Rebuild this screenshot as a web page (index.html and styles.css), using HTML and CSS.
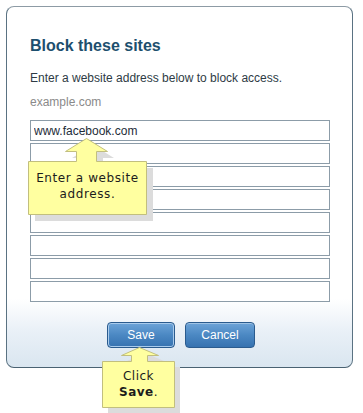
FILE: index.html
```html
<!DOCTYPE html>
<html>
<head>
<meta charset="utf-8">
<link rel="stylesheet" href="styles.css">
</head>
<body>
<div class="panel">
  <h1 class="title">Block these sites</h1>
  <p class="desc">Enter a website address below to block access.</p>
  <p class="hint">example.com</p>
  <div class="list">
    <input class="field" type="text" value="www.facebook.com">
    <input class="field" type="text">
    <input class="field" type="text">
    <input class="field" type="text">
    <input class="field" type="text">
    <input class="field" type="text">
    <input class="field" type="text">
    <input class="field" type="text">
  </div>
  <div class="actions">
    <button class="btn btn-focus">Save</button>
    <button class="btn">Cancel</button>
  </div>
</div>

<div class="callout callout-site">
  <svg class="callout-shape" width="128" height="84" viewBox="0 0 128 84">
    <polygon class="shadow" points="65,7 86,20 75,20 75,30 125,30 125,83 7,83 7,30 55,30 55,20 44,20"/>
    <polygon class="bubble" points="58.5,0.5 79.5,13.5 68.5,13.5 68.5,23.5 118.5,23.5 118.5,76.5 0.5,76.5 0.5,23.5 48.5,23.5 48.5,13.5 37.5,13.5"/>
  </svg>
  <div class="callout-text callout-text-site">Enter a website<br>address.</div>
</div>

<div class="callout callout-save">
  <svg class="callout-shape" width="80" height="67" viewBox="0 0 80 67">
    <polygon class="shadow" points="43,6 62,14 51,14 51,20 78,20 78,66 6,66 6,20 35,20 35,14 25,14"/>
    <polygon class="bubble" points="37.5,0.5 56.5,8.5 45.5,8.5 45.5,14.5 72.5,14.5 72.5,60.5 0.5,60.5 0.5,14.5 29.5,14.5 29.5,8.5 19.5,8.5"/>
  </svg>
  <div class="callout-text callout-text-save">Click<br><b>Save</b>.</div>
</div>
</body>
</html>
```

FILE: styles.css
```css
html, body {
  margin: 0;
  padding: 0;
  background: #ffffff;
}

body {
  padding: 6px;
  width: 363px;
  height: 413px;
  box-sizing: border-box;
  font-family: "Liberation Sans", Arial, sans-serif;
  position: relative;
  overflow: hidden;
}

.panel {
  width: 347px;
  height: 362px;
  box-sizing: border-box;
  border: 1px solid #5a7282;
  border-top-color: #8d9ba5;
  border-bottom-color: #4a6272;
  border-radius: 8px;
  background: linear-gradient(to bottom, #ffffff 0%, #ffffff 81%, #e9f0f7 90%, #dae6f0 100%);
  padding: 29px 0 0 23px;
}

.title {
  margin: 0;
  font-size: 16px;
  line-height: 20px;
  font-weight: bold;
  color: #1d4f6e;
}

.desc {
  margin: 15px 0 0;
  font-size: 12px;
  line-height: 15px;
  color: #2e3b45;
}

.hint {
  margin: 9px 0 0;
  font-size: 12px;
  line-height: 15px;
  color: #8a8a8a;
}

.list {
  margin-top: 10px;
  display: flex;
  flex-direction: column;
  gap: 2px;
}

.field {
  display: block;
  width: 300px;
  height: 21px;
  box-sizing: border-box;
  margin: 0;
  padding: 0 3px;
  border: 1px solid #8c9ca8;
  border-radius: 0;
  background: #ffffff;
  font-family: "Liberation Sans", Arial, sans-serif;
  font-size: 12px;
  color: #1e2c38;
  outline: none;
}

.actions {
  display: flex;
  gap: 10px;
  margin: 20px 0 0 77px;
}

.btn {
  height: 26px;
  box-sizing: border-box;
  padding: 0;
  border: 1px solid #2a5b8e;
  border-radius: 4px;
  background: linear-gradient(to bottom, #6da4d8 0%, #4b88c3 50%, #3672b0 100%);
  color: #ffffff;
  font-family: "Liberation Sans", Arial, sans-serif;
  font-size: 12px;
  width: 70px;
  box-shadow: inset 0 1px 0 rgba(255, 255, 255, 0.35);
}

.btn-focus {
  width: 68px;
  box-shadow: inset 0 0 0 1px #a9cbec;
}

.callout {
  position: absolute;
}

.callout-shape {
  position: absolute;
  left: 0;
  top: 0;
  display: block;
}

.shadow {
  fill: #dcdcdc;
}

.bubble {
  fill: #ffffa0;
  stroke: #c2bf7e;
  stroke-width: 1;
}

.callout-text {
  position: absolute;
  left: 0;
  text-align: center;
  font-family: "DejaVu Sans", Verdana, sans-serif;
  font-size: 12px;
  line-height: 16px;
  color: #1c1c1c;
}

.callout-site {
  left: 28px;
  top: 138px;
  width: 128px;
  height: 84px;
}

.callout-text-site {
  top: 32px;
  width: 119px;
  letter-spacing: 0.6px;
}

.callout-save {
  left: 102px;
  top: 347px;
  width: 80px;
  height: 67px;
}

.callout-text-save {
  top: 21px;
  width: 73px;
  letter-spacing: 0.5px;
}

.callout-text-save b {
  font-weight: bold;
}
```
